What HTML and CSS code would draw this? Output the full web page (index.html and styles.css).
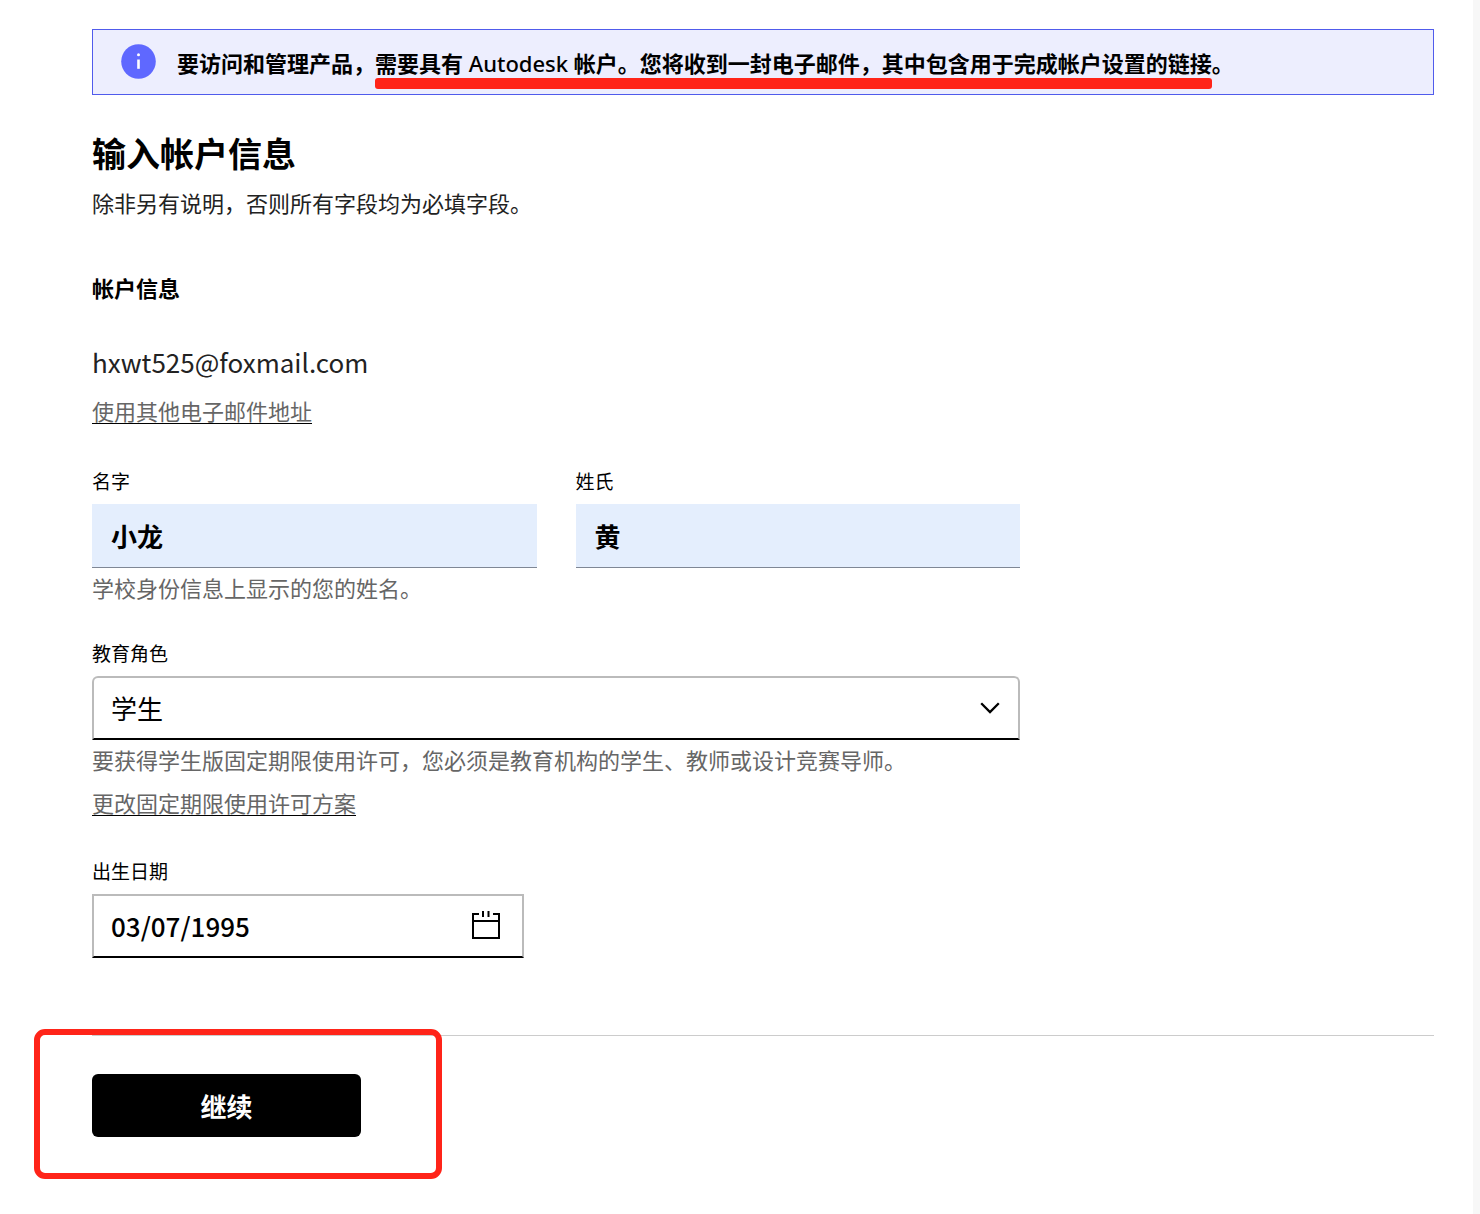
FILE: index.html
```html
<!DOCTYPE html>
<html lang="zh-CN">
<head>
<meta charset="utf-8">
<meta name="viewport" content="width=device-width, initial-scale=1">
<title>输入帐户信息</title>
<link rel="stylesheet" href="styles.css">
</head>
<body>
<main class="page">
  <div class="notice" role="note">
    <svg class="notice-icon" viewBox="0 0 36 36" aria-hidden="true">
      <circle cx="17.5" cy="17.5" r="17.3" fill="#5f68ff"/>
      <circle cx="17.5" cy="10.8" r="1.5" fill="#fff"/>
      <path d="M17.5 15.5v9.3" stroke="#fff" stroke-width="2.6"/>
    </svg>
    <p class="notice-text">要访问和管理产品，<span class="marked">需要具有<span class="brand"> Autodesk </span>帐户。您将收到一封电子邮件，其中包含用于完成帐户设置的链接</span>。</p>
  </div>

  <h1 class="title">输入帐户信息</h1>
  <p class="intro">除非另有说明，否则所有字段均为必填字段。</p>

  <form class="form">
    <h2 class="subtitle">帐户信息</h2>
    <p class="email">hxwt525@foxmail.com</p>
    <p class="email-change"><a class="link" href="#">使用其他电子邮件地址</a></p>

    <div class="names">
      <div class="field">
        <label class="label" for="first-name">名字</label>
        <input class="control filled" id="first-name" type="text" value="小龙">
      </div>
      <div class="field">
        <label class="label" for="last-name">姓氏</label>
        <input class="control filled" id="last-name" type="text" value="黄">
      </div>
    </div>
    <p class="hint">学校身份信息上显示的您的姓名。</p>

    <div class="field education">
      <label class="label" for="role">教育角色</label>
      <div class="select">
        <select class="control role" id="role">
          <option>学生</option>
        </select>
        <svg class="chevron" viewBox="0 0 20 12" aria-hidden="true">
          <path d="M1.2 1.2 10 10l8.800-8.800" fill="none" stroke="#000" stroke-width="2.300"/>
        </svg>
      </div>
    </div>
    <p class="hint">要获得学生版固定期限使用许可，您必须是教育机构的学生、教师或设计竞赛导师。</p>
    <p class="role-change"><a class="link" href="#">更改固定期限使用许可方案</a></p>

    <div class="field birth">
      <label class="label" for="birth">出生日期</label>
      <div class="control date">
        <input class="date-input" id="birth" type="text" value="03/07/1995">
        <button class="date-button" type="button" aria-label="选择日期">
          <svg class="calendar" viewBox="0 0 30 30" fill="none" stroke="#000" stroke-width="2" aria-hidden="true">
            <path d="M8 3H2v24h26V3h-6M2 10h26M12 0v6M17.500 0v6"/>
          </svg>
        </button>
      </div>
    </div>

    <hr class="rule">
    <div class="actions">
      <button class="submit" type="button">继续</button>
    </div>
  </form>
</main>
</body>
</html>
```
FILE: styles.css
```css
* {
  box-sizing: border-box;
}

body {
  margin: 0;
  min-height: 100vh;
  border-right: 7px solid #f7f7f7;
  background: #fff;
  color: #000;
  font: 22px/32px "Noto Sans CJK SC", "Noto Sans", sans-serif;
}

h1, h2, p {
  margin: 0;
}

input, select, button {
  color: inherit;
  font: inherit;
}

.page {
  padding: 29px 39px 32px 92px;
}

.notice {
  display: flex;
  align-items: center;
  gap: 20px;
  padding: 14px 28px;
  border: 1px solid #505bec;
  background: #edeefe;
}

.notice-icon {
  flex: none;
  width: 36px;
  height: 36px;
}

.notice-text {
  font-weight: 600;
}

.brand {
  font-family: "Noto Sans", sans-serif;
  font-weight: 500;
}

/* red marker stroke below the key sentence */
.marked {
  position: relative;
}

.marked::after {
  content: "";
  position: absolute;
  right: 0;
  bottom: -11px;
  left: 0;
  height: 11px;
  border-radius: 3px;
  background: #ff2419;
}

.title {
  margin-top: 34px;
  font-size: 34px;
  line-height: 48px;
}

.intro {
  margin-top: 9px;
  color: #222;
}

.subtitle {
  margin-top: 53px;
  font-size: 22px;
}

.email {
  margin-top: 43px;
  color: #222;
  font-size: 26px;
}

.email-change {
  margin-top: 16px;
}

.link {
  color: #666;
  text-decoration: underline 1px #000;
  text-underline-offset: 3px;
}

.names,
.education {
  max-width: 928px;
}

.names {
  display: grid;
  grid-template-columns: 1fr 1fr;
  gap: 39px;
  margin-top: 43px;
}

.education {
  margin-top: 38px;
}

.birth {
  max-width: 432px;
  margin-top: 41px;
}

.field {
  display: flex;
  flex-direction: column;
  gap: 11px;
}

.label {
  font-size: 19px;
  line-height: 24px;
}

.control {
  width: 100%;
  height: 64px;
  border: 2px solid #bbb;
  border-bottom-color: #000;
  border-radius: 0;
  background: #fff;
  font-size: 26px;
}

.filled {
  padding: 0 19px;
  border-width: 0 0 1px;
  border-color: #7f8795;
  background: #e4eefd;
  font-weight: 700;
}

.select {
  display: grid;
  align-items: center;
}

.role {
  grid-area: 1 / 1;
  padding: 0 17px;
  border-radius: 6px 6px 0 0;
  appearance: none;
}

.chevron {
  grid-area: 1 / 1;
  justify-self: end;
  width: 20px;
  height: 12px;
  margin-right: 20px;
  pointer-events: none;
}

.hint {
  margin-top: 3px;
  color: #666;
}

.role-change {
  margin-top: 11px;
}

.date {
  display: flex;
  align-items: center;
  padding: 0 21px 0 17px;
}

.date-input {
  flex: 1;
  min-width: 0;
  padding: 0;
  border: 0;
  background: none;
  font-weight: 500;
}

.date-button {
  display: flex;
  padding: 0;
  border: 0;
  background: none;
}

.calendar {
  width: 30px;
  height: 30px;
}

.rule {
  height: 1px;
  margin: 77px 0 38px;
  border: 0;
  background: #ccc;
}

.actions {
  position: relative;
  width: fit-content;
}

/* red frame drawn round the button */
.actions::before {
  content: "";
  position: absolute;
  inset: -45px -81px -42px -58px;
  border: 6px solid #ff2419;
  border-radius: 11px;
  pointer-events: none;
}

.submit {
  width: 269px;
  height: 63px;
  border: 0;
  border-radius: 6px;
  background: #000;
  color: #fff;
  font-size: 26px;
  font-weight: 700;
}
```
